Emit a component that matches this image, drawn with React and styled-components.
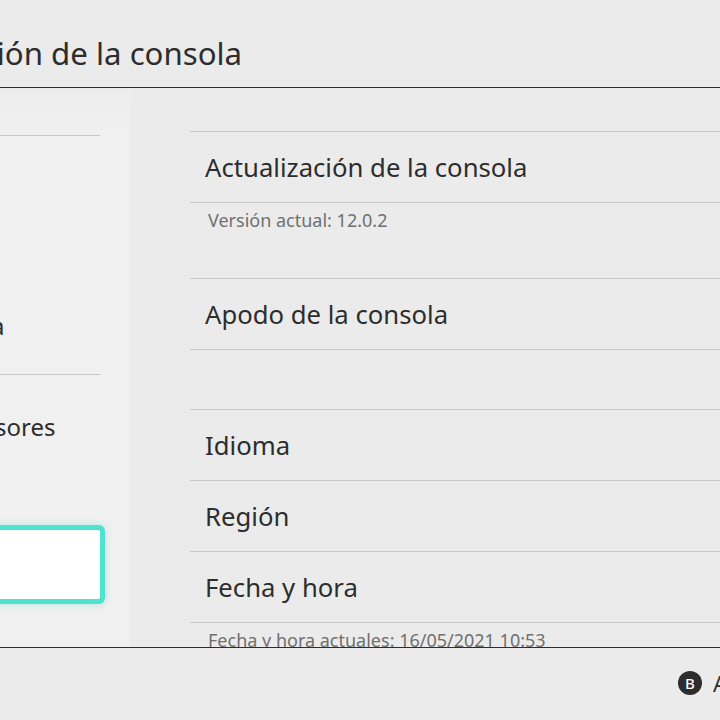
import React from 'react';
import styled, { createGlobalStyle, css } from 'styled-components';

const GlobalStyle = createGlobalStyle`
  html, body {
    margin: 0;
    padding: 0;
    background-color: #ebebeb;
  }

  body {
    font-family: "Noto Sans", "Open Sans", sans-serif;
    color: #2d2d2d;
  }
`;

const Screen = styled.div`
  width: 720px;
  height: 720px;
  overflow: hidden;
  display: grid;
  grid-template-rows: 88px 1fr 73px;
  background-color: #ebebeb;
`;

const Header = styled.header`
  display: flex;
  align-items: flex-end;
  border-bottom: 1px solid #2d2d2d;
  padding-bottom: 14px;
  white-space: nowrap;
`;

const Title = styled.h1`
  font-size: 31.2px;
  font-weight: 400;
  line-height: 1.25;
  margin: 0 0 0 -163px;
`;

const Body = styled.div`
  display: flex;
  overflow: hidden;
  min-height: 0;
`;

const Sidebar = styled.nav`
  flex: 0 0 130px;
  background: linear-gradient(180deg, #ececec 0%, #f0f0f0 8%, #f0f0f0 100%);
  padding-top: 47px;
  box-sizing: border-box;
`;

const SideDivider = styled.div`
  width: 100px;
  border-top: 1px solid #c6c6c6;
`;

const SideGroup = styled.div`
  width: 278px;
  margin-left: -178px;
  padding-top: 17px;
  padding-bottom: 14px;
`;

const SideItem = styled.div`
  display: flex;
  align-items: center;
  height: 69px;
  font-size: 24px;
  white-space: nowrap;
  border-radius: 2px;

  ${props => props.selected && css`
    background-color: #ffffff;
    box-shadow: 0 0 0 5px #4fe2d0, 0 0 7px 5px rgba(79, 226, 208, 0.45);
  `}
`;

const Main = styled.main`
  flex: 1;
  padding-left: 60px;
  padding-top: 43px;
  min-width: 0;
`;

const Group = styled.div`
  border-top: 1px solid #c8c8c8;
  margin-top: ${props => props.gap || 0}px;
`;

const Row = styled.div`
  display: flex;
  align-items: center;
  height: 71px;
  padding-left: 15px;
  box-sizing: border-box;
  border-bottom: 1px solid #c8c8c8;
  font-size: 25.7px;
  white-space: nowrap;
`;

const Note = styled.div`
  height: ${props => props.height || 75}px;
  padding-left: 18px;
  padding-top: 5px;
  box-sizing: border-box;
  font-size: 18px;
  color: #707070;
  white-space: nowrap;
`;

const Footer = styled.footer`
  display: flex;
  align-items: center;
  gap: 11px;
  border-top: 1px solid #2d2d2d;
  padding-left: 678px;
  padding-bottom: 2px;
  white-space: nowrap;
`;

const ButtonGlyph = styled.span`
  display: inline-flex;
  align-items: center;
  justify-content: center;
  flex: 0 0 24px;
  width: 24px;
  height: 24px;
  border-radius: 50%;
  background-color: #2d2d2d;
  color: #ffffff;
  font-size: 15px;
  font-weight: 500;
`;

const FooterLabel = styled.span`
  font-size: 22px;
`;

const sideTop = ['Temas', 'Notificaciones', 'Modo de espera'];
const sideBottom = ['Controles y sensores', 'Televisión', 'Consola'];

export default function App() {
  return (
    <>
      <GlobalStyle />
      <Screen>
        <Header>
          <Title>Configuración de la consola</Title>
        </Header>

        <Body>
          <Sidebar>
            <SideDivider />
            <SideGroup>
              {sideTop.map(item => (
                <SideItem key={item}>{item}</SideItem>
              ))}
            </SideGroup>
            <SideDivider />
            <SideGroup>
              {sideBottom.map(item => (
                <SideItem key={item} selected={item === 'Consola'}>{item}</SideItem>
              ))}
            </SideGroup>
          </Sidebar>

          <Main>
            <Group>
              <Row>Actualización de la consola</Row>
            </Group>
            <Note>Versión actual: 12.0.2</Note>
            <Group>
              <Row>Apodo de la consola</Row>
            </Group>
            <Group gap={59}>
              <Row>Idioma</Row>
              <Row>Región</Row>
              <Row>Fecha y hora</Row>
            </Group>
            <Note>Fecha y hora actuales: 16/05/2021 10:53</Note>
          </Main>
        </Body>

        <Footer>
          <ButtonGlyph>B</ButtonGlyph>
          <FooterLabel>Atrás</FooterLabel>
        </Footer>
      </Screen>
    </>
  );
}
